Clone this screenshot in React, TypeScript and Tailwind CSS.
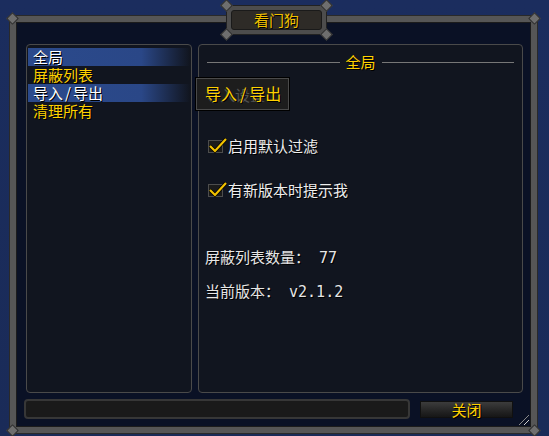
import { useState } from 'react';

const cjk = { fontFamily: '"Noto Sans CJK SC", "DejaVu Sans", sans-serif' };
const mono = { fontFamily: '"DejaVu Sans Mono", "Noto Sans CJK SC", monospace' };

const menu = [
  { label: '全局', active: true },
  { label: '屏蔽列表', active: false },
  { label: '导入/导出', active: true },
  { label: '清理所有', active: false },
];

function Rivet({ className }: { className: string }) {
  return (
    <div
      className={`absolute w-[9px] h-[9px] rotate-45 bg-[#6e6e6e] border border-[#2a2a2a] ${className}`}
    />
  );
}

function CheckBox() {
  return (
    <div className="relative w-[15px] h-[13px] bg-[#1b1b1b] border border-[#4d4d4d] shrink-0">
      <svg className="absolute -left-[1px] -top-[4px]" width="20" height="18" viewBox="0 0 20 18">
        <path d="M2 9 L7 14 L18 2" fill="none" stroke="#000" strokeWidth="3.5" />
        <path d="M2 9 L7 14 L18 2" fill="none" stroke="#f2c200" strokeWidth="2.2" />
      </svg>
    </div>
  );
}

// slash a little wider, like the game font
function Label({ text, gap }: { text: string; gap: string }) {
  const parts = text.split('/');
  if (parts.length === 1) return <>{text}</>;
  return (
    <>
      {parts[0]}
      <span className={gap}>/</span>
      {parts[1]}
    </>
  );
}

export default function App() {
  const [checks] = useState([true, true]);

  return (
    <div
      className="relative w-[549px] h-[436px] overflow-hidden bg-gradient-to-b from-[#1b2d5e] to-[#1a2b58] pt-[16px] pl-[10px]"
      style={cjk}
    >
      {/* main frame */}
      <div className="relative w-[527px] h-[417px] border-[6px] border-[#565656] bg-[#0a1125] shadow-[inset_0_0_0_1px_#1c1c1c,0_0_0_1px_#2a2a2a] flex flex-col pl-[10px] pr-[8px] pt-[22px] pb-[6px]">
        <Rivet className="-left-[8px] -top-[8px]" />
        <Rivet className="-right-[8px] -top-[8px]" />
        <Rivet className="-left-[8px] -bottom-[8px]" />
        <Rivet className="-right-[8px] -bottom-[8px]" />

        <div className="flex gap-[6px] h-[349px]">
          {/* left list */}
          <div className="w-[166px] rounded-[4px] border border-[#4a4a4a] bg-[#11151f] pt-[3px] px-[1px]">
            {menu.map((m) => (
              <div
                key={m.label}
                className={`h-[18px] pl-[5px] text-[15px] leading-[18px] [text-shadow:1px_1px_0_#000] ${
                  m.active
                    ? 'text-white bg-gradient-to-r from-[#2b4a8c] via-[#2a4787] via-70% to-transparent'
                    : 'text-[#ffd100]'
                }`}
              >
                <Label text={m.label} gap="mx-[2px]" />
              </div>
            ))}
          </div>

          {/* right content */}
          <div className="w-[325px] rounded-[4px] border border-[#4a4a4a] bg-[#11151f] flex flex-col">
            <div className="flex items-center gap-[6px] mt-[8px] px-[8px]">
              <div className="flex-1 h-[1px] bg-[#777]" />
              <span className="text-[15px] leading-[18px] text-[#ffd100] [text-shadow:1px_1px_0_#000]">全局</span>
              <div className="flex-1 h-[1px] bg-[#777]" />
            </div>

            <div className="relative -ml-[3px] mt-[7px] w-[93px] h-[32px] bg-[#1d1d1d] border border-[#4a4a4a] shadow-[0_0_0_1px_#000]">
              <span className="absolute left-[8px] top-[7px] text-[15px] leading-[18px] text-[#505050]">导入设置</span>
              <span className="absolute left-[8px] top-[5px] text-[16px] leading-[18px] text-[#ffd100] [text-shadow:1px_1px_0_#000]">
                <Label text="导入/导出" gap="mx-[3px]" />
              </span>
            </div>

            <div className="flex flex-col gap-[26px] mt-[27px] pl-[9px]">
              {['启用默认过滤', '有新版本时提示我'].map((t, i) => (
                <div key={t} className="flex items-center gap-[5px] h-[18px]">
                  {checks[i] && <CheckBox />}
                  <span className="text-[15px] leading-[18px] text-[#eeeeee] [text-shadow:1px_1px_0_#000]">{t}</span>
                </div>
              ))}
            </div>

            <div className="flex flex-col gap-[16px] mt-[50px] pl-[6px] text-[15px] leading-[18px] text-[#e6e6e6] [text-shadow:1px_1px_0_#000]" style={mono}>
              <div>屏蔽列表数量： 77</div>
              <div>当前版本： v2.1.2</div>
            </div>
          </div>
        </div>

        {/* bottom bar */}
        <div className="flex items-end gap-[10px] mt-[6px] -ml-[2px]">
          <div className="w-[386px] h-[20px] rounded-[4px] bg-[#1a1a1a] border-2 border-[#373737]" />
          <button className="w-[93px] h-[17px] mb-[1px] bg-gradient-to-b from-[#3c3c3c] to-[#161616] border border-[#101010] text-[15px] leading-[15px] text-[#ffd100] [text-shadow:1px_1px_0_#000]">
            关闭
          </button>
        </div>

        {/* resize grip */}
        <svg className="absolute right-[1px] bottom-[1px]" width="12" height="12" viewBox="0 0 12 12">
          <path d="M1 11 L11 1" stroke="#8a8a8a" strokeWidth="1" />
          <path d="M6 11 L11 6" stroke="#cfcfcf" strokeWidth="1" />
        </svg>
      </div>

      {/* title plaque */}
      <div className="absolute left-[226px] top-[5px] w-[101px] h-[30px] bg-[#4d4d4d] border border-[#222] p-[4px]">
        <Rivet className="-left-[5px] -top-[5px]" />
        <Rivet className="-right-[5px] -top-[5px]" />
        <Rivet className="-left-[5px] -bottom-[5px]" />
        <Rivet className="-right-[5px] -bottom-[5px]" />
        <div className="w-full h-full rounded-[3px] bg-[#2e2b27] border border-[#1a1a1a] flex items-center justify-center text-[15px] leading-[18px] text-[#f0c000] [text-shadow:1px_1px_0_#000]">
          看门狗
        </div>
      </div>
    </div>
  );
}
